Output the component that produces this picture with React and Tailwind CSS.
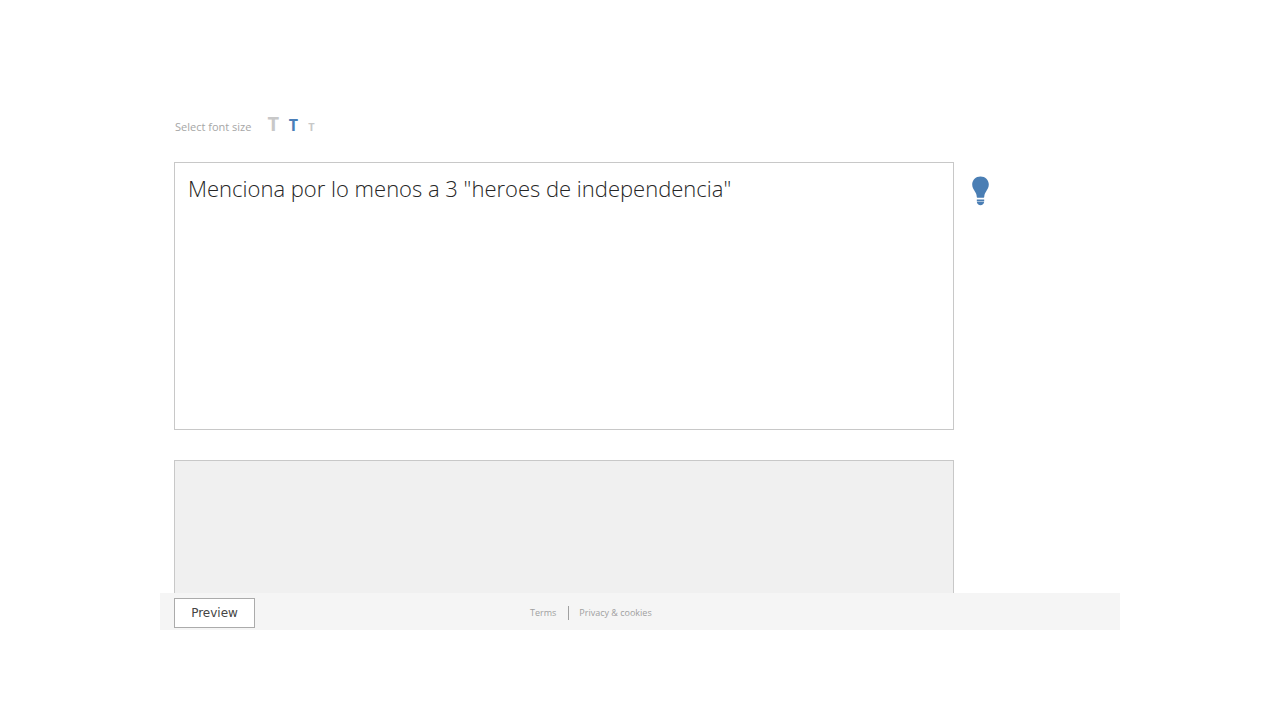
import React, { useState } from "react";

const sizes = [
  { id: "large", label: "Large", glyph: "text-[20px]", box: "w-5", field: "text-[30px] leading-10" },
  { id: "medium", label: "Medium", glyph: "text-[16px]", box: "w-5", field: "text-[22px] leading-8" },
  { id: "small", label: "Small", glyph: "text-[11px]", box: "w-4", field: "text-[16px] leading-6" },
];

function FontSizePicker({ value, onChange }) {
  return (
    <div className="flex h-6 items-baseline gap-3 pl-px text-[#a6a6a6]">
      <span className="text-[11px] leading-6">Select font size</span>
      <div className="flex items-baseline">
        {sizes.map((size) => (
          <button
            key={size.id}
            type="button"
            aria-label={size.label}
            aria-pressed={value === size.id}
            className={`${size.box} ${size.glyph} ${value === size.id ? "text-[#4a7eb8]" : "text-[#c8c8c8]"} text-center font-bold leading-6`}
            onClick={() => onChange(size.id)}
          >
            T
          </button>
        ))}
      </div>
    </div>
  );
}

function BulbIcon() {
  return (
    <svg viewBox="0 0 18 30" className="h-[30px] w-[18px]" fill="#4a7eb4" aria-hidden="true">
      <path d="M8.5 0.5C3.8 0.5 0.2 4 0.2 8.6c0 2.8 1.3 4.8 2.7 6.9 1.1 1.6 1.7 3 1.8 4.7 0 1 0.4 1.5 1.2 1.5h5.2c0.8 0 1.2-0.5 1.2-1.5 0.1-1.7 0.7-3.1 1.8-4.7 1.4-2.1 2.7-4.1 2.7-6.9C16.8 4 13.2 0.5 8.5 0.5z" />
      <path d="M4.8 23.6h7.4v1.6H4.8zM4.8 25.8h7.4c-0.3 2.2-1.7 3.4-3.7 3.4s-3.4-1.2-3.7-3.4z" />
    </svg>
  );
}

export default function App() {
  const [size, setSize] = useState("medium");
  const [question, setQuestion] = useState('Menciona por lo menos a 3 "heroes de independencia"');
  const active = sizes.find((s) => s.id === size);

  return (
    <div className="min-h-screen bg-white py-[90px] font-['Open_Sans',sans-serif]">
      <div className="mx-auto max-w-[960px]">
        <main className="pr-[130px] pl-[14px] pt-[22px]">
          <FontSizePicker value={size} onChange={setSize} />
          <div className="mt-[26px] flex items-start gap-[18px]">
            <textarea
              aria-label="Question"
              className={`${active.field} block h-[268px] min-w-0 flex-1 resize-none border border-[#c8c8c8] px-[13px] py-[9px] font-light text-[#262626] outline-none`}
              spellCheck={false}
              value={question}
              onChange={(e) => setQuestion(e.target.value)}
            />
            <button type="button" aria-label="Hint" className="mt-[14px] shrink-0">
              <BulbIcon />
            </button>
          </div>
          <div className="mt-[30px] mr-9 h-[133px] border border-b-0 border-[#c8c8c8] bg-[#f0f0f0]" />
        </main>
        <footer className="grid grid-cols-[356px_1fr] items-center bg-[#f5f5f5] pt-[5px] pb-[2px] pl-[14px] max-sm:grid-cols-2">
          <button
            type="button"
            className="h-[30px] w-[81px] border border-[#ababab] bg-white font-['DejaVu_Sans',sans-serif] text-[12px] text-[#444444]"
          >
            Preview
          </button>
          <nav className="flex items-center text-[9px] text-[#a0a0a0]">
            <a href="#terms">Terms</a>
            <a href="#privacy" className="ml-3 border-l border-[#a0a0a0] pl-[10px]">
              Privacy &amp; cookies
            </a>
          </nav>
        </footer>
      </div>
    </div>
  );
}
